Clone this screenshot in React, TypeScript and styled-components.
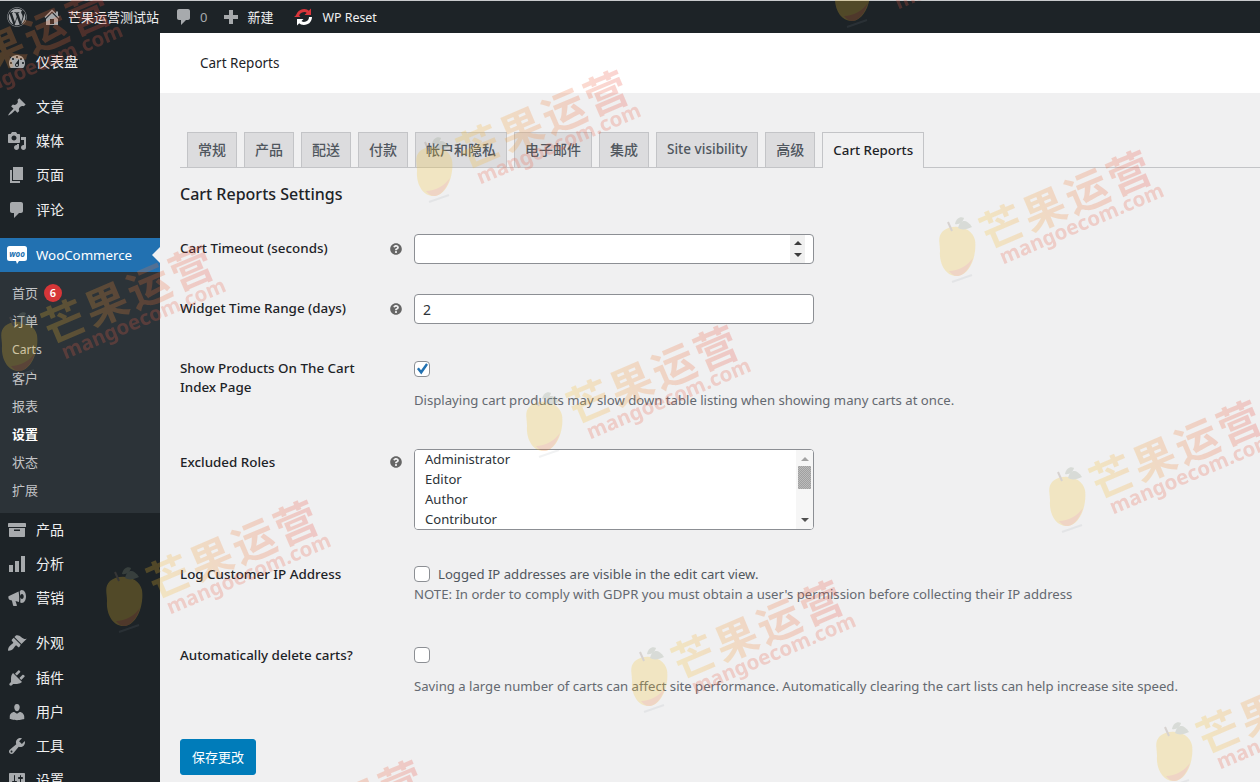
import * as React from 'react';
import styled, { createGlobalStyle } from 'styled-components';
import { FaWordpress, FaQuestionCircle } from 'react-icons/fa';

const GlobalStyle = createGlobalStyle`
    * {
        box-sizing: border-box;
    }

    html,
    body {
        margin: 0;
        height: 100%;
        overflow: hidden;
        background: #f0f0f1;
        font-family: 'Noto Sans', 'Noto Sans CJK SC', sans-serif;
        font-size: 13px;
        color: #2c3338;
    }
`;

const icons: Record<string, string> = {
    home: 'M16 8.5l1.53 1.53-1.06 1.06L10 4.62l-6.47 6.47-1.06-1.06L10 2.5l4 4v-2h2v4zm-6-2.46l6 5.99V18H4v-5.97zM12 17v-5H8v5h4z',
    comment: 'M5 2h9c1.1 0 2 .9 2 2v7c0 1.1-.9 2-2 2h-2l-5 5v-5H5c-1.1 0-2-.9-2-2V4c0-1.1.9-2 2-2z',
    plus: 'M17 8v4h-5v5H8v-5H3V8h5V3h4v5h5z',
    dashboard: 'M3.76 16h12.48c1.1-1.37 1.76-3.11 1.76-5 0-4.42-3.58-8-8-8s-8 3.58-8 8c0 1.89.66 3.63 1.76 5zM10 4c.55 0 1 .45 1 1s-.45 1-1 1-1-.45-1-1 .45-1 1-1zM6 6c.55 0 1 .45 1 1s-.45 1-1 1-1-.45-1-1 .45-1 1-1zm8 0c.55 0 1 .45 1 1s-.45 1-1 1-1-.45-1-1 .45-1 1-1zm-5.37 5.55L12 7v6c0 1.1-.9 2-2 2s-2-.9-2-2c0-.57.24-1.08.63-1.45zM4 10c.55 0 1 .45 1 1s-.45 1-1 1-1-.45-1-1 .45-1 1-1zm12 0c.55 0 1 .45 1 1s-.45 1-1 1-1-.45-1-1 .45-1 1-1zm-5 3c0-.55-.45-1-1-1s-1 .45-1 1 .45 1 1 1 1-.45 1-1z',
    pin: 'M10.44 3.02l1.82-1.82 6.36 6.35-1.83 1.82c-1.05-.68-2.48-.57-3.41.36l-.75.75c-.92.93-1.04 2.35-.35 3.41l-1.83 1.82-2.41-2.41-2.8 2.79c-.42.42-3.38 2.71-3.8 2.29s1.86-3.39 2.28-3.81l2.79-2.79L4.1 9.36l1.83-1.82c1.05.69 2.48.57 3.4-.36l.75-.75c.93-.92 1.05-2.35.36-3.41z',
    media: 'M13 11V4c0-.55-.45-1-1-1h-1.67L9 1H5L3.67 3H2c-.55 0-1 .45-1 1v7c0 .55.45 1 1 1h10c.55 0 1-.45 1-1zM7 4.5c1.38 0 2.5 1.12 2.5 2.5S8.38 9.5 7 9.5 4.5 8.38 4.5 7 5.62 4.5 7 4.5zM14 6h5v10.5c0 1.38-1.12 2.5-2.5 2.5S14 17.88 14 16.5s1.12-2.5 2.5-2.5c.17 0 .34.02.5.05V9h-3V6zm-4 8.05V13h2v3.5c0 1.38-1.12 2.5-2.5 2.5S7 17.88 7 16.5 8.12 14 9.5 14c.17 0 .34.02.5.05z',
    page: 'M6 15V2h10v13H6zm-1 1h8v2H3V5h2v11z',
    archive: 'M19 4v3H1V4c0-.55.45-1 1-1h16c.55 0 1 .45 1 1zM2 8h16v8c0 .55-.45 1-1 1H3c-.55 0-1-.45-1-1V8zm11 3V9.5H7V11h6z',
    bars: 'M18 18V2h-4v16h4zm-6 0V7H8v11h4zm-6 0v-7H2v7h4z',
    megaphone: 'M1.5 8.2 11.6 3.4c.5 3.2.9 7 .4 10.6L8.5 13l1.4 4.2c.1.4-.1.8-.5.8H6.8c-.3 0-.6-.2-.7-.5L4.9 12.4 3 12c-1.3-.4-2-2.7-1.5-3.8zM14.8 2c2.4 0 4.2 2.9 4.2 6.5S17.2 15 14.8 15c-.6 0-1.1-.2-1.6-.5.5-3.6.1-7.900-.5-11.100.6-.9 1.300-1.400 2.100-1.400zm.2 4c-1 0-1.700 1.100-1.700 2.500S14 11 15 11s1.700-1.100 1.700-2.500S16 6 15 6z',
    brush: 'M14.48 11.06L7.41 3.99l1.5-1.5c.5-.56 2.3-.47 3.51.32 1.21.8 1.43 1.28 2.91 2.1 1.18.64 2.45 1.26 4.45.85zm-.71.71L6.7 4.7 4.93 6.47c-.39.39-.39 1.02 0 1.41l1.06 1.06c.39.39.39 1.03 0 1.42-.6.6-1.43 1.11-2.21 1.69-.35.26-.7.53-1.01.84-1.35 1.350-2.020 3.400-1.620 4.800 1.400.4 3.450-.27 4.800-1.620.31-.31.58-.66.84-1.010.58-.78 1.090-1.610 1.690-2.210.39-.39 1.030-.39 1.420 0l1.060 1.060c.39.39 1.020.39 1.410 0z',
    plugin: 'M13.11 4.36L9.87 7.6 8 5.73l3.24-3.24c.35-.34 1.05-.2 1.56.32.52.51.66 1.21.31 1.55zm-8 1.77l.91-1.12 9.01 9.01-1.19.84c-.71.71-2.63 1.16-3.82 1.16H6.14L4.9 17.26c-.59.59-1.54.59-2.12 0-.59-.58-.59-1.53 0-2.12l1.24-1.24v-3.88c0-1.13.4-3.19 1.09-3.89zm7.26 3.97l3.24-3.24c.34-.35 1.04-.21 1.55.31.52.51.66 1.21.31 1.55l-3.24 3.25z',
    user: 'M10 9.25c-2.27 0-2.73-3.44-2.73-3.44C7 4.02 7.82 2 9.97 2c2.16 0 2.98 2.02 2.71 3.81 0 0-.41 3.44-2.68 3.44zm0 2.57L12.72 10c2.39 0 4.52 2.33 4.52 4.53v2.49s-3.65 1.13-7.24 1.13c-3.65 0-7.24-1.13-7.24-1.13v-2.49c0-2.25 1.94-4.48 4.47-4.48z',
    wrench: 'M16.68 9.77c-1.34 1.34-3.3 1.67-4.95.99l-5.41 6.52c-.99.99-2.59.99-3.58 0s-.99-2.59 0-3.57l6.52-5.42c-.68-1.65-.35-3.61.99-4.95 1.28-1.28 3.12-1.62 4.72-1.06l-2.89 2.89 2.82 2.82 2.86-2.87c.53 1.58.18 3.39-1.08 4.65zM3.81 16.21c.4.39 1.04.39 1.43 0 .4-.4.4-1.04 0-1.43-.39-.4-1.03-.4-1.43 0-.39.39-.39 1.03 0 1.43z',
    settings: 'M18 16V4c0-.55-.45-1-1-1H3c-.55 0-1 .45-1 1v12c0 .55.45 1 1 1h14c.55 0 1-.45 1-1zM8 11h1c.55 0 1 .45 1 1s-.45 1-1 1H8v1.5c0 .28-.22.5-.5.5s-.5-.22-.5-.5V13H6c-.55 0-1-.45-1-1s.45-1 1-1h1V5.500c0-.28.22-.5.5-.5s.5.22.5.5V11zm5-2h-1c-.55 0-1-.45-1-1s.45-1 1-1h1V5.500c0-.28.22-.5.5-.5s.5.22.5.5V7h1c.55 0 1 .45 1 1s-.45 1-1 1h-1v5.500c0 .28-.22.5-.5.5s-.5-.22-.5-.5V9z'
};

const Page = styled.div`
    display: grid;
    grid-template-columns: 160px 1fr;
    grid-template-rows: 33px 1fr;
    height: 100vh;
    overflow: hidden;
`;

const AdminBar = styled.header`
    grid-column: 1 / 3;
    display: flex;
    align-items: center;
    background: #1d2327;
    border-top: 1px solid #c8cacc;
    color: #f0f0f1;
    font-size: 13px;
`;

const BarItem = styled.div<{ $left: number; $gap?: number }>`
    display: flex;
    align-items: center;
    gap: ${({ $gap }) => $gap ?? 6}px;
    margin-left: ${({ $left }) => $left}px;
    white-space: nowrap;
`;

const BarText = styled.span`
    margin-top: -2px;
`;

const BarLatin = styled.span`
    font-size: 12.4px;
`;

const BarCount = styled.span`
    color: #a7aaad;
`;

const Sidebar = styled.nav`
    background: #1d2327;
    padding-top: 12px;
    overflow: hidden;
`;

const MenuItem = styled.div<{ $gap?: boolean; $active?: boolean }>`
    position: relative;
    display: flex;
    align-items: center;
    gap: 9px;
    height: 34.2px;
    padding-left: 7px;
    margin-top: ${({ $gap }) => ($gap ? 10.8 : 0)}px;
    color: #f0f0f1;
    font-size: 14px;
    background: ${({ $active }) => ($active ? '#2271b1' : 'transparent')};

    ${({ $active }) =>
        $active &&
        `
        color: #fff;
        font-size: 13.3px;

        &::after {
            content: '';
            position: absolute;
            right: 0;
            top: 50%;
            margin-top: -8px;
            border: 8px solid transparent;
            border-right-color: #f0f0f1;
        }
    `}
`;

const MenuLabel = styled.span`
    margin-top: -2px;
`;

const SubMenu = styled.div`
    background: #2c3338;
    padding: 7px 0 9.5px;
`;

const SubItem = styled.div<{ $current?: boolean; $latin?: boolean }>`
    display: flex;
    align-items: center;
    gap: 6px;
    height: 28.1px;
    padding-left: 12px;
    padding-top: ${({ $latin }) => ($latin ? 2 : 0)}px;
    font-size: ${({ $latin }) => ($latin ? 12.2 : 13)}px;
    color: ${({ $current }) => ($current ? '#fff' : '#c3c4c7')};
    font-weight: ${({ $current }) => ($current ? 700 : 400)};
`;

const Badge = styled.span`
    display: inline-flex;
    align-items: center;
    justify-content: center;
    width: 18px;
    height: 18px;
    border-radius: 50%;
    background: #d63638;
    color: #fff;
    font-size: 11px;
    font-weight: 600;
`;

const Main = styled.main`
    min-width: 0;
    overflow: hidden;
`;

const TitleBar = styled.div`
    height: 60px;
    display: flex;
    align-items: center;
    padding-left: 40px;
    background: #fff;
    color: #1d2327;
    font-size: 13.5px;
`;

const Content = styled.div`
    padding: 39px 0 0 20px;
`;

const Tabs = styled.div`
    display: flex;
    gap: 7px;
    height: 36px;
    padding-left: 7px;
    border-bottom: 1px solid #c3c4c7;
`;

const Tab = styled.div<{ $active?: boolean; $size?: number }>`
    height: 36px;
    padding: 0 10px 2px;
    display: flex;
    align-items: center;
    border: 1px solid #c3c4c7;
    border-bottom: ${({ $active }) => ($active ? 'none' : '1px solid #c3c4c7')};
    background: ${({ $active }) => ($active ? '#f0f0f1' : '#dcdcde')};
    color: ${({ $active }) => ($active ? '#1d2327' : '#50575e')};
    font-size: ${({ $size }) => $size ?? 14}px;
    font-weight: 500;
    white-space: nowrap;
`;

const Heading = styled.h2`
    margin: 14px 0 0;
    height: 25px;
    line-height: 25px;
    font-size: 16px;
    font-weight: 500;
    color: #1d2327;
`;

const Row = styled.div<{ $top: number }>`
    display: grid;
    grid-template-columns: 210px 24px 400px 1fr;
    margin-top: ${({ $top }) => $top}px;
`;

const Label = styled.div<{ $top?: number }>`
    width: 190px;
    padding-top: ${({ $top }) => $top ?? 0}px;
    font-size: 13.4px;
    line-height: 19px;
    font-weight: 500;
    color: #1d2327;
`;

const Help = styled.div<{ $top?: number }>`
    padding-top: ${({ $top }) => $top ?? 0}px;
    color: #666;
    font-size: 12px;
    line-height: 0;
`;

const Field = styled.div`
    grid-column: 3 / 5;
`;

const ControlWrap = styled.div`
    position: relative;
    width: 400px;
`;

const TextInput = styled.input`
    display: block;
    width: 400px;
    height: 30px;
    padding: 0 8px;
    border: 1px solid #8c8f94;
    border-radius: 4px;
    background: #fff;
    color: #2c3338;
    font: inherit;
    font-size: 14px;
    appearance: textfield;

    &::-webkit-inner-spin-button {
        display: none;
    }
`;

const Spinner = styled.div`
    position: absolute;
    right: 9px;
    top: 1px;
    bottom: 1px;
    width: 15px;
    display: flex;
    flex-direction: column;
    align-items: center;
    justify-content: space-between;
    padding: 6px 0;
    background: #f0f0f0;
`;

const Arrow = styled.span<{ $down?: boolean; $color?: string }>`
    width: 0;
    height: 0;
    border-left: 4px solid transparent;
    border-right: 4px solid transparent;
    ${({ $down, $color }) =>
        $down
            ? `border-top: 4px solid ${$color ?? '#3c3c3c'};`
            : `border-bottom: 4px solid ${$color ?? '#3c3c3c'};`}
`;

const CheckInput = styled.input<{ $top?: number }>`
    appearance: none;
    position: relative;
    display: block;
    flex: none;
    width: 16px;
    height: 16px;
    margin: ${({ $top }) => $top ?? 0}px 0 0;
    border: 1px solid #8c8f94;
    border-radius: 4px;
    background: #fff;

    &:checked::before {
        content: '';
        position: absolute;
        inset: 1px;
        background: #2271b1;
        clip-path: polygon(8% 50%, 24% 38%, 42% 60%, 84% 2%, 100% 14%, 44% 96%);
    }
`;

const Description = styled.div<{ $top?: number }>`
    margin-top: ${({ $top }) => $top ?? 0}px;
    font-size: 13.15px;
    line-height: 20px;
    color: #646970;
    white-space: nowrap;
`;

const InlineCheck = styled.div`
    display: flex;
    align-items: center;
    gap: 8px;
    height: 20px;
    margin-top: -1px;
    font-size: 13.15px;
    color: #50575e;
`;

const RolesSelect = styled.select`
    display: block;
    width: 400px;
    height: 81px;
    padding: 0 2px;
    border: 1px solid #8c8f94;
    border-radius: 4px;
    background: #fff;
    color: #2c3338;
    font: inherit;
    font-size: 13.1px;

    option {
        padding: 0 8px 1px;
        height: 20px;
        line-height: 19px;
        min-height: 20px;
    }
`;

const Scrollbar = styled.div`
    position: absolute;
    right: 1px;
    top: 1px;
    bottom: 1px;
    width: 17px;
    display: flex;
    flex-direction: column;
    align-items: center;
    justify-content: space-between;
    padding: 7px 0;
    border-radius: 0 3px 3px 0;
    background: #f6f6f6;
`;

const ScrollThumb = styled.div`
    position: absolute;
    left: 2px;
    top: 16px;
    width: 13px;
    height: 23px;
    background: repeating-conic-gradient(#a0a0a0 0 25%, #bbb 0 50%) 0 0 / 2px 2px;
`;

const SaveButton = styled.button`
    display: block;
    width: 76px;
    height: 36px;
    margin-top: 43px;
    padding: 0 0 2px;
    border: 1px solid #007cba;
    border-radius: 3px;
    background: #007cba;
    color: #fff;
    font: inherit;
    font-size: 13px;
`;

const Overlay = styled.div`
    position: fixed;
    inset: 0;
    overflow: hidden;
    pointer-events: none;
    z-index: 10;
`;

const Mark = styled.div<{ $x: number; $y: number }>`
    position: absolute;
    left: ${({ $x }) => $x}px;
    top: ${({ $y }) => $y}px;
    width: 0;
    height: 0;
    opacity: 0.24;
`;

const MarkFruit = styled.svg`
    position: absolute;
    left: -30px;
    top: -38px;
`;

const MarkText = styled.div`
    position: absolute;
    left: 0;
    top: 0;
    transform: rotate(-23deg);
    transform-origin: 0 0;
`;

const MarkName = styled.div`
    position: absolute;
    left: 28px;
    top: -32px;
    white-space: nowrap;
    font-family: 'Noto Sans CJK SC', sans-serif;
    font-size: 43px;
    line-height: 50px;
    font-weight: 700;
    letter-spacing: 3px;
    background: linear-gradient(100deg, #f6c12f 5%, #f08a3c 45%, #ea4b3e 95%);
    -webkit-background-clip: text;
    background-clip: text;
    color: transparent;
`;

const MarkDomain = styled.div`
    position: absolute;
    left: 36px;
    top: 9px;
    white-space: nowrap;
    font-family: 'Noto Sans', sans-serif;
    font-size: 20.5px;
    line-height: 28px;
    font-weight: 700;
    color: #e9604a;
`;

const Icon = ({ name, size = 20 }: { name: string; size?: number }) => (
    <svg width={size} height={size} viewBox="0 0 20 20" fill="#a7aaad" fillRule="evenodd">
        <path d={icons[name]} />
    </svg>
);

const ResetIcon = () => (
    <svg width="20" height="20" viewBox="0 0 20 20" fill="none">
        <path d="M3.500 10a6.500 6.500 0 0 1 11-4.700" stroke="#d9363b" strokeWidth="3" />
        <path d="M17 1.500v6.500h-6.500z" fill="#d9363b" />
        <path d="M16.500 10a6.500 6.500 0 0 1-11 4.700" stroke="#fff" strokeWidth="3" />
        <path d="M3 18.500V12h6.500z" fill="#fff" />
        <path d="M0 10l3.500-3 3 3z" fill="#d9363b" />
    </svg>
);

const WooIcon = () => (
    <svg width="20" height="20" viewBox="0 0 20 20">
        <path d="M2.500 1h15A2.500 2.500 0 0 1 20 3.500v10a2.500 2.500 0 0 1-2.500 2.500H12l-2 3-1-3H2.500A2.500 2.500 0 0 1 0 13.500v-10A2.500 2.500 0 0 1 2.500 1z" fill="#fff" />
        <text x="10" y="11.500" textAnchor="middle" fontSize="8" fontWeight="700" fontStyle="italic" fill="#2271b1">
            woo
        </text>
    </svg>
);

const Fruit = () => (
    <MarkFruit width="60" height="72" viewBox="0 0 60 72">
        <path
            d="M15 19C24 11 44 14 47 28C49 42 43 62 30 64C18 65 11 52 12 39C12 31 9 25 15 19Z"
            fill="#f6c62f"
        />
        <path d="M45 46C42 55 37 63 30 64C26 64 23 62 21 59C30 59 39 54 45 46Z" fill="#ef7f3a" />
        <path d="M30 16C32 8 38 6 44 15C38 18 33 18 30 16Z" fill="#8d9c86" />
        <path d="M27 12C28 7 32 4 36 6C35 10 31 13 27 12Z" fill="#8d9c86" />
        <path d="M20 10L24 19" stroke="#8a7468" strokeWidth="2" />
        <path d="M24 70L44 63" stroke="#8f98a0" strokeWidth="2" opacity="0.5" />
    </MarkFruit>
);

const marks = [
    [-83, 90],
    [20, 345],
    [125, 600],
    [230, 860],
    [435, 170],
    [545, 425],
    [650, 680],
    [853, -5],
    [958, 250],
    [1068, 500],
    [1175, 755]
];

const topMenu = [
    { icon: 'dashboard', label: '仪表盘' },
    { icon: 'pin', label: '文章', gap: true },
    { icon: 'media', label: '媒体' },
    { icon: 'page', label: '页面' },
    { icon: 'comment', label: '评论' }
];

const bottomMenu = [
    { icon: 'archive', label: '产品' },
    { icon: 'bars', label: '分析' },
    { icon: 'megaphone', label: '营销' },
    { icon: 'brush', label: '外观', gap: true },
    { icon: 'plugin', label: '插件' },
    { icon: 'user', label: '用户' },
    { icon: 'wrench', label: '工具' },
    { icon: 'settings', label: '设置' }
];

const tabs = ['常规', '产品', '配送', '付款', '帐户和隐私', '电子邮件', '集成'];

const App = () => (
    <>
        <GlobalStyle />
        <Page>
            <AdminBar>
                <BarItem $left={7}>
                    <FaWordpress size={20} color="#a7aaad" />
                </BarItem>
                <BarItem $left={15}>
                    <Icon name="home" />
                    <BarText>芒果运营测试站</BarText>
                </BarItem>
                <BarItem $left={15}>
                    <Icon name="comment" />
                    <BarCount>0</BarCount>
                </BarItem>
                <BarItem $left={14}>
                    <Icon name="plus" />
                    <BarText>新建</BarText>
                </BarItem>
                <BarItem $left={21} $gap={8}>
                    <ResetIcon />
                    <BarLatin>WP Reset</BarLatin>
                </BarItem>
            </AdminBar>

            <Sidebar>
                {topMenu.map(item => (
                    <MenuItem key={item.label} $gap={item.gap}>
                        <Icon name={item.icon} />
                        <MenuLabel>{item.label}</MenuLabel>
                    </MenuItem>
                ))}
                <MenuItem $gap $active>
                    <WooIcon />
                    WooCommerce
                </MenuItem>
                <SubMenu>
                    <SubItem>
                        首页 <Badge>6</Badge>
                    </SubItem>
                    <SubItem>订单</SubItem>
                    <SubItem $latin>Carts</SubItem>
                    <SubItem>客户</SubItem>
                    <SubItem>报表</SubItem>
                    <SubItem $current>设置</SubItem>
                    <SubItem>状态</SubItem>
                    <SubItem>扩展</SubItem>
                </SubMenu>
                {bottomMenu.map(item => (
                    <MenuItem key={item.label} $gap={item.gap}>
                        <Icon name={item.icon} />
                        <MenuLabel>{item.label}</MenuLabel>
                    </MenuItem>
                ))}
            </Sidebar>

            <Main>
                <TitleBar>Cart Reports</TitleBar>
                <Content>
                    <Tabs>
                        {tabs.map(label => (
                            <Tab key={label}>{label}</Tab>
                        ))}
                        <Tab $size={13.55}>Site visibility</Tab>
                        <Tab>高级</Tab>
                        <Tab $active $size={13.3}>
                            Cart Reports
                        </Tab>
                    </Tabs>
                    <Heading>Cart Reports Settings</Heading>

                    <Row $top={27}>
                        <Label $top={5}>Cart Timeout (seconds)</Label>
                        <Help $top={9}>
                            <FaQuestionCircle />
                        </Help>
                        <Field>
                            <ControlWrap>
                                <TextInput type="number" />
                                <Spinner>
                                    <Arrow />
                                    <Arrow $down />
                                </Spinner>
                            </ControlWrap>
                        </Field>
                    </Row>

                    <Row $top={30}>
                        <Label $top={5}>Widget Time Range (days)</Label>
                        <Help $top={9}>
                            <FaQuestionCircle />
                        </Help>
                        <Field>
                            <TextInput type="text" defaultValue="2" />
                        </Field>
                    </Row>

                    <Row $top={34}>
                        <Label $top={1}>Show Products On The Cart Index Page</Label>
                        <div />
                        <Field>
                            <CheckInput type="checkbox" defaultChecked $top={3} />
                            <Description $top={13}>
                                Displaying cart products may slow down table listing when showing many carts at once.
                            </Description>
                        </Field>
                    </Row>

                    <Row $top={39}>
                        <Label $top={4}>Excluded Roles</Label>
                        <Help $top={7}>
                            <FaQuestionCircle />
                        </Help>
                        <Field>
                            <ControlWrap>
                                <RolesSelect multiple size={4} defaultValue={[]}>
                                    <option>Administrator</option>
                                    <option>Editor</option>
                                    <option>Author</option>
                                    <option>Contributor</option>
                                    <option>Subscriber</option>
                                    <option>Customer</option>
                                    <option>Shop manager</option>
                                </RolesSelect>
                                <Scrollbar>
                                    <Arrow $color="#a3a3a3" />
                                    <ScrollThumb />
                                    <Arrow $down $color="#505050" />
                                </Scrollbar>
                            </ControlWrap>
                        </Field>
                    </Row>

                    <Row $top={35}>
                        <Label>Log Customer IP Address</Label>
                        <div />
                        <Field>
                            <InlineCheck>
                                <CheckInput type="checkbox" />
                                Logged IP addresses are visible in the edit cart view.
                            </InlineCheck>
                            <Description>
                                NOTE: In order to comply with GDPR you must obtain a user's permission before collecting their IP address
                            </Description>
                        </Field>
                    </Row>

                    <Row $top={42}>
                        <Label>Automatically delete carts?</Label>
                        <div />
                        <Field>
                            <CheckInput type="checkbox" $top={1} />
                            <Description $top={13}>
                                Saving a large number of carts can affect site performance. Automatically clearing the cart lists can help increase site speed.
                            </Description>
                        </Field>
                    </Row>

                    <SaveButton>保存更改</SaveButton>
                </Content>
            </Main>
        </Page>

        <Overlay>
            {marks.map(([x, y]) => (
                <Mark key={`${x}-${y}`} $x={x} $y={y}>
                    <Fruit />
                    <MarkText>
                        <MarkName>芒果运营</MarkName>
                        <MarkDomain>mangoecom.com</MarkDomain>
                    </MarkText>
                </Mark>
            ))}
        </Overlay>
    </>
);

export default App;
